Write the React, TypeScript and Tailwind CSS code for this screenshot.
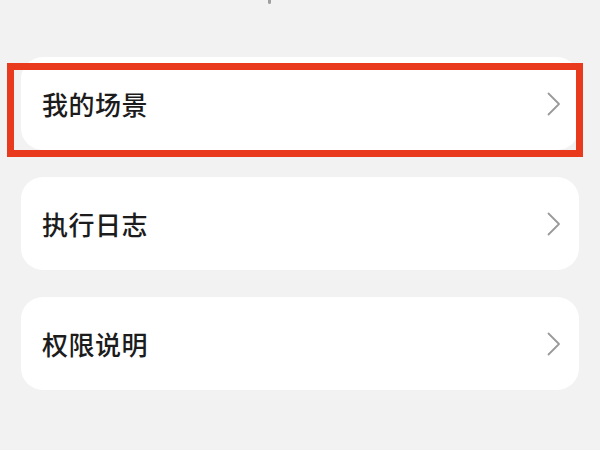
const ITEMS = ['我的场景', '执行日志', '权限说明']

function Chevron() {
  return (
    <svg width="14" height="24" viewBox="0 0 14 24" fill="none" className="shrink-0">
      <polyline points="1.5,1.5 12,12 1.5,22.5" stroke="#9b9b9b" strokeWidth="1.8" strokeLinecap="round" strokeLinejoin="round" />
    </svg>
  )
}

export default function App() {
  return (
    <div
      className="w-[600px] h-[450px] overflow-hidden bg-[#f2f2f2]"
      style={{ fontFamily: '"Noto Sans CJK SC", "Noto Sans", sans-serif' }}
    >
      {/* cut-off mark from the content above */}
      <div className="h-[57px] pl-[268px]">
        <div className="w-[3px] h-[4px] bg-[#a0a0a0] rounded-b-sm" />
      </div>

      <div className="flex flex-col gap-[27px] px-[21px]">
        {ITEMS.map((label, i) => (
          <div
            key={label}
            className="relative h-[93px] rounded-[22px] bg-white flex items-center justify-between pl-[21px] pr-[18px]"
          >
            <span className="text-[26px] leading-none font-medium text-[#1c1c1c] tracking-[0.5px]">{label}</span>
            <Chevron />
            {i === 0 && (
              <div className="absolute left-[-14px] right-[-4px] top-[6px] bottom-[-7px] border-[7px] border-[#ea3a1e] pointer-events-none" />
            )}
          </div>
        ))}
      </div>
    </div>
  )
}
